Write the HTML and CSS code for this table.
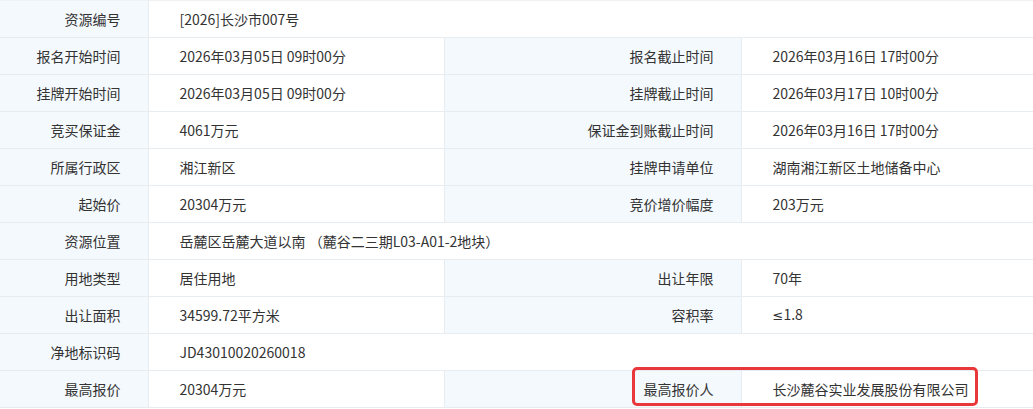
FILE: index.html
```html
<!DOCTYPE html>
<html lang="zh-CN">
<head>
    <meta charset="UTF-8">
    <title>资源详情</title>
    <link rel="stylesheet" href="styles.css">
</head>
<body>
    <div class="detail-wrap">
        <table class="detail-table">
            <colgroup>
                <col class="col-label">
                <col class="col-value">
                <col class="col-label2">
                <col class="col-value2">
            </colgroup>
            <tr>
                <th>资源编号</th>
                <td colspan="3">[2026]长沙市007号</td>
            </tr>
            <tr>
                <th>报名开始时间</th>
                <td>2026年03月05日 09时00分</td>
                <th>报名截止时间</th>
                <td>2026年03月16日 17时00分</td>
            </tr>
            <tr>
                <th>挂牌开始时间</th>
                <td>2026年03月05日 09时00分</td>
                <th>挂牌截止时间</th>
                <td>2026年03月17日 10时00分</td>
            </tr>
            <tr>
                <th>竞买保证金</th>
                <td>4061万元</td>
                <th>保证金到账截止时间</th>
                <td>2026年03月16日 17时00分</td>
            </tr>
            <tr>
                <th>所属行政区</th>
                <td>湘江新区</td>
                <th>挂牌申请单位</th>
                <td>湖南湘江新区土地储备中心</td>
            </tr>
            <tr>
                <th>起始价</th>
                <td>20304万元</td>
                <th>竞价增价幅度</th>
                <td>203万元</td>
            </tr>
            <tr>
                <th>资源位置</th>
                <td colspan="3">岳麓区岳麓大道以南 （麓谷二三期L03-A01-2地块）</td>
            </tr>
            <tr>
                <th>用地类型</th>
                <td>居住用地</td>
                <th>出让年限</th>
                <td>70年</td>
            </tr>
            <tr>
                <th>出让面积</th>
                <td>34599.72平方米</td>
                <th>容积率</th>
                <td><span class="sym">≤</span>1.8</td>
            </tr>
            <tr>
                <th>净地标识码</th>
                <td colspan="3">JD43010020260018</td>
            </tr>
            <tr>
                <th>最高报价</th>
                <td>20304万元</td>
                <th>最高报价人</th>
                <td>长沙麓谷实业发展股份有限公司</td>
            </tr>
        </table>
        <!-- annotation box drawn over the last row -->
        <div class="mark-box"></div>
    </div>
</body>
</html>
```

FILE: styles.css
```css
body {
    margin: 0;
    background-color: #fff;
    color: #333;
    font-family: "Microsoft YaHei", "Noto Sans CJK SC", sans-serif;
    font-size: 14px;
}
.detail-wrap {
    position: relative;
    width: 1033px;
}
.detail-table {
    width: 100%;
    border-collapse: collapse;
    table-layout: fixed;
}
.col-label { width: 148px; }
.col-value { width: 296px; }
.col-label2 { width: 297px; }
.col-value2 { width: 292px; }
.detail-table th,
.detail-table td {
    height: 36px;
    padding: 0;
    border: 1px solid #e6ecef;
    vertical-align: middle;
    white-space: nowrap;
    line-height: 20px;
}
.detail-table th {
    background-color: #f3f9fd;
    font-weight: normal;
    text-align: right;
    padding-right: 27px;
}
.detail-table td {
    padding-left: 31px;
    text-align: left;
}
.detail-table tr:first-child th,
.detail-table tr:first-child td {
    border-top-color: #eef2f4;
}
.detail-table th:first-child {
    border-left: none;
}
.detail-table td:last-child {
    border-right: none;
}
.sym {
    font-family: "DejaVu Sans", sans-serif;
    font-size: 13px;
}
.mark-box {
    position: absolute;
    left: 632px;
    top: 367px;
    width: 340px;
    height: 33px;
    border: 3px solid #e9383c;
    border-radius: 5px;
}
```
